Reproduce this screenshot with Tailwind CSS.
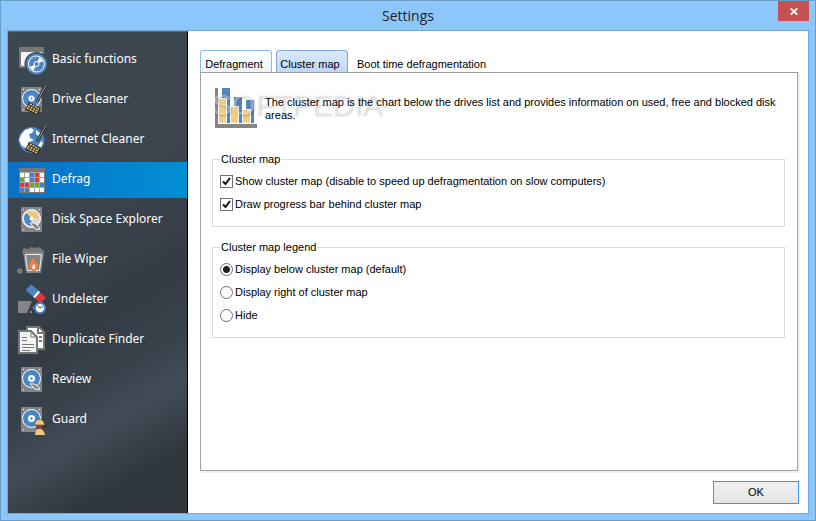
<!DOCTYPE html>
<html lang="en">
<head>
  <meta charset="UTF-8" />
  <meta name="viewport" content="width=device-width, initial-scale=1.0" />
  <title>Settings</title>
  <script src="https://cdn.jsdelivr.net/npm/@tailwindcss/browser@4"></script>
</head>
<body class="flex min-h-screen flex-col border border-[#6a9cc8] bg-[#8cc6fa] px-[6px] pb-[6px] font-['Liberation_Sans',sans-serif] text-[11px] leading-[13px] text-black">
  <!-- Title bar -->
  <header class="relative flex h-[29px] shrink-0 items-center justify-center">
    <h1 class="font-['Open_Sans',sans-serif] text-[14px] leading-5 text-[#222]">Settings</h1>
    <button aria-label="Close" class="absolute right-0 top-0 flex h-5 w-[31px] items-center justify-center bg-[#c75050]">
      <svg class="h-[7px] w-2" viewBox="0 0 8 7" fill="none" stroke="#fff" stroke-width="1.7"><path d="M.7.3l6.6 6.4M7.3.3L.7 6.7"/></svg>
    </button>
  </header>

  <div class="flex flex-1 border border-[#74a9dc] bg-white">
    <!-- Sidebar -->
    <nav class="w-[180px] shrink-0 border-r border-t border-r-black border-t-[#666b70] bg-[linear-gradient(150deg,#3d474f_0%,#3c454e_36%,#343c45_56%,#37414a_68%,#414c56_77%,#30383f_88%,#2f363d_100%)] pt-[10px] font-['Noto_Sans',sans-serif]">
      <ul class="flex flex-col gap-1 text-[12px] leading-4 text-white">
        <li><a href="#" class="flex h-9 items-center gap-1 pl-2">
          <svg class="h-9 w-8" viewBox="0 0 32 36">
            <path d="M3 5h25v21H3z" fill="#777"/><path d="M5 10h21v14H5z" fill="#f4f4f4"/>
            <circle cx="20.500" cy="22" r="12" fill="#3d474f"/><circle cx="20.500" cy="22" r="10.500" fill="#4a86c5"/>
            <circle cx="20.500" cy="22" r="8" fill="none" stroke="#fff"/>
            <path d="M20.500 22l3-7 4 4zM20.500 22l-7 3 4 4z" fill="#fff"/><circle cx="20.500" cy="22" r="2.500" fill="#4a86c5" stroke="#fff"/>
          </svg>
          <span class="pb-[2px]">Basic functions</span></a></li>
        <li><a href="#" class="flex h-9 items-center gap-1 pl-2">
          <svg class="h-9 w-8" viewBox="0 0 32 36">
            <rect x="5" y="5" width="21" height="25" rx="1" fill="#858585"/>
            <circle cx="15.500" cy="16.500" r="9" fill="#4a86c5" stroke="#fff"/><circle cx="15.500" cy="16.500" r="3" fill="#fff"/><circle cx="15.500" cy="16.500" r="1" fill="#4a86c5"/>
            <path d="M7 7h1v1H7zM23 7h1v1h-1zM7 27h1v1H7z" fill="#fff"/>
            <path d="M30 3L21 20" stroke="#333" stroke-width="3"/><path d="M30 3L21 20" stroke="#999"/>
            <path d="M13 20l12 6-3 7-13-5z" fill="#333"/><path d="M14 22l9 5M12 24l10 5M11 26l10 5" stroke="#f0c875" stroke-width="1.500" stroke-dasharray="2 1"/>
          </svg>
          <span class="pb-[2px]">Drive Cleaner</span></a></li>
        <li><a href="#" class="flex h-9 items-center gap-1 pl-2">
          <svg class="h-9 w-8" viewBox="0 0 32 36">
            <circle cx="15.500" cy="18" r="13" fill="#4a86c5"/>
            <path d="M5 13l4-5 6-2 3 2-2 3-3 1 1 4 4 2-5 2-3 6-4-2-3-6zM20 8l6 5-2 2-4-3zM22 24l3-5 2 2-2 4z" fill="#fff"/>
            <path d="M30 3L21 20" stroke="#333" stroke-width="3"/><path d="M30 3L21 20" stroke="#999"/>
            <path d="M13 20l12 6-3 7-13-5z" fill="#333"/><path d="M14 22l9 5M12 24l10 5M11 26l10 5" stroke="#f0c875" stroke-width="1.500" stroke-dasharray="2 1"/>
          </svg>
          <span class="pb-[2px]">Internet Cleaner</span></a></li>
        <li><a href="#" aria-current="page" class="flex h-9 items-center gap-1 bg-gradient-to-r from-[#0a70c7] to-[#038fd4] pl-2">
          <svg class="h-9 w-8" viewBox="0 0 32 36">
            <path d="M3 6h26v25H3z" fill="#777"/><path d="M4 10h24v20H4z" fill="#a8a8a8"/>
            <path d="M4 11h4v4H4zM9 11h4v4H9zM24 11h4v4h-4zM9 16h4v4H9zM24 16h4v4h-4zM14 26h4v4h-4zM19 26h4v4h-4zM24 26h4v4h-4z" fill="#fff"/>
            <path d="M14 11h4v4h-4zM14 16h4v4h-4zM24 21h4v4h-4zM4 26h4v4H4zM9 26h4v4H9z" fill="#4a7fc1"/>
            <path d="M19 11h4v4h-4zM19 16h4v4h-4zM4 21h4v4H4zM9 21h4v4H9z" fill="#d93a3a"/>
            <path d="M4 16h4v4H4zM14 21h4v4h-4zM19 21h4v4h-4z" fill="#6aa831"/>
          </svg>
          <span class="pb-[2px]">Defrag</span></a></li>
        <li><a href="#" class="flex h-9 items-center gap-1 pl-2">
          <svg class="h-9 w-8" viewBox="0 0 32 36">
            <rect x="5" y="5" width="21" height="25" rx="1" fill="#858585"/>
            <circle cx="15.500" cy="16.500" r="9" fill="#d8d8d8" stroke="#fff"/>
            <path d="M15.500 16.500V24a7.500 7.500 0 0 1-5-13z" fill="#4a86c5"/><path d="M15.500 16.500l-4-6a7.500 7.500 0 0 1 11.500 6z" fill="#f0c875"/>
            <circle cx="15.500" cy="16.500" r="2" fill="#fff"/>
            <path d="M14 21c5-1 8 2 10 6-5 2-7-3-10-6z" fill="#858585" stroke="#fff"/>
            <path d="M7 7h1v1H7zM23 7h1v1h-1zM7 27h1v1H7z" fill="#fff"/>
          </svg>
          <span class="pb-[2px]">Disk Space Explorer</span></a></li>
        <li><a href="#" class="flex h-9 items-center gap-1 pl-2">
          <svg class="h-9 w-8" viewBox="0 0 32 36">
            <path d="M6 9l2-3 4 1 3-2 4 1 4-1 5 4-1 3H7z" fill="#777"/>
            <path d="M7 10h21l-3 21H10z" fill="#858585"/><path d="M9.500 12.500h16l-2 16h-12z" fill="none" stroke="#eee"/>
            <path d="M17 14c0 5 5 6 5 10a4 4 0 0 1-9 1c-1-4 4-6 4-11z" fill="#f08040"/><path d="M18 22c2 3 1 5-.500 5s-2-2 .500-5z" fill="#fff"/>
            <path d="M1 28l2-2 3 1 1 3-3 2-3-2z" fill="#777"/>
          </svg>
          <span class="pb-[2px]">File Wiper</span></a></li>
        <li><a href="#" class="flex h-9 items-center gap-1 pl-2">
          <svg class="h-9 w-8" viewBox="0 0 32 36">
            <path d="M2 19h14l-5 12H2z" fill="#858585"/>
            <g transform="rotate(42 19.500 11.500)">
              <rect x="10" y="7.500" width="11" height="8" rx="1" fill="#4a86c5"/>
              <rect x="22" y="7.500" width="8" height="8" rx="2" fill="#d93a3a"/>
              <path d="M20 7.500h2v8h-2z" fill="#fff"/>
            </g>
            <circle cx="24" cy="26" r="5" fill="#fff" stroke="#4a86c5" stroke-width="2"/><path d="M21.500 23.500L24 26l3-2" fill="none" stroke="#345"/>
            <path d="M16 25l4-1-2 4z" fill="#4a86c5"/><path d="M14 29h2v2h-2z" fill="#858585"/>
          </svg>
          <span class="pb-[2px]">Undeleter</span></a></li>
        <li><a href="#" class="flex h-9 items-center gap-1 pl-2">
          <svg class="h-9 w-8" viewBox="0 0 32 36">
            <path d="M11 5h12l5 5v17H11z" fill="#fff" stroke="#777" stroke-width="2"/><path d="M22 5v6h6M23 15h3M23 19h3" stroke="#777" stroke-width="2" fill="none"/>
            <path d="M3 9h12l6 6v16H3z" fill="#f4f4f4" stroke="#777" stroke-width="2"/>
            <path d="M15 9v6h6M6 15.500h5M6 18.500h5M6 22.500h12M6 25.500h12M6 28.500h8" stroke="#777" fill="none"/>
          </svg>
          <span class="pb-[2px]">Duplicate Finder</span></a></li>
        <li><a href="#" class="flex h-9 items-center gap-1 pl-2">
          <svg class="h-9 w-8" viewBox="0 0 32 36">
            <rect x="5" y="5" width="21" height="25" rx="1" fill="#858585"/>
            <circle cx="15.500" cy="16.500" r="9" fill="#4a86c5" stroke="#fff"/><circle cx="15.500" cy="16.500" r="3.500" fill="#fff"/><circle cx="15.500" cy="16.500" r="1.200" fill="#4a86c5"/>
            <path d="M14 22c5-1 8 2 10 5-4 2-7-2-10-5z" fill="#858585" stroke="#fff"/>
            <path d="M7 7h1v1H7zM23 7h1v1h-1zM7 27h1v1H7z" fill="#fff"/>
          </svg>
          <span class="pb-[2px]">Review</span></a></li>
        <li><a href="#" class="flex h-9 items-center gap-1 pl-2">
          <svg class="h-9 w-8" viewBox="0 0 32 36">
            <rect x="5" y="5" width="21" height="25" rx="1" fill="#858585"/>
            <circle cx="15.500" cy="16.500" r="9" fill="#4a86c5" stroke="#fff"/><circle cx="15.500" cy="16.500" r="3.500" fill="#fff"/><circle cx="15.500" cy="16.500" r="1.200" fill="#4a86c5"/>
            <path d="M7 7h1v1H7zM23 7h1v1h-1zM7 27h1v1H7z" fill="#fff"/>
            <path d="M19 21c1-5 8-5 9 0l1 2H18z" fill="#f0c875" stroke="#333" stroke-width=".5"/><path d="M20 23h7v4h-7z" fill="#6b4f3a"/>
            <path d="M19 33c0-8 9-8 10 0z" fill="#f0c875"/><path d="M26 26l3-2h2" stroke="#222" fill="none"/>
          </svg>
          <span class="pb-[2px]">Guard</span></a></li>
      </ul>
    </nav>

    <!-- Settings pane -->
    <main class="flex flex-1 flex-col pb-[9px] pl-3 pr-[9px] pt-[19px]">
      <div role="tablist" class="flex h-[22px] items-stretch gap-1">
        <button role="tab" class="w-[72px] rounded-t border border-b-0 border-[#8db9e8] bg-gradient-to-b from-white to-[#edf4fe] pr-1 pt-[5px] text-center">Defragment</button>
        <button role="tab" aria-selected="true" class="w-[72px] rounded-t border border-b-0 border-[#7da5d8] bg-gradient-to-b from-[#dbe9fc] to-[#bdd8fb] pr-1 pt-[5px] text-center">Cluster map</button>
        <button role="tab" class="px-[5px] pt-[6px]">Boot time defragmentation</button>
      </div>

      <section role="tabpanel" class="mr-px flex-1 border border-[#a0a0a0] px-3 pl-[11px] pt-3 shadow-[1px_1px_0_1px_#f0f0f0]">
        <div class="relative flex gap-2">
          <svg class="ml-[3px] mt-[2px] h-[42px] w-[42px] shrink-0" viewBox="0 0 42 42">
            <path d="M0 1h3v36h39v4H0z" fill="#858585"/>
            <path d="M7 1h8v35H7zM19 10h8v26h-8zM31 13h8v23h-8z" fill="#5585b8"/>
            <path d="M3.500 11.500h8V36h-8zM15.500 19.500h8V36h-8zM27.500 22.500h8V36h-8z" fill="#f4cc80" stroke="#fff"/>
          </svg>
          <span class="pointer-events-none absolute left-0 top-1 text-[30px] leading-8 text-white/40 [text-shadow:1px_1px_2px_#00000030]">SOFTPEDIA<sup class="text-[10px]">®</sup></span>
          <p class="relative pt-[11px]">The cluster map is the chart below the drives list and provides information on used, free and blocked disk areas.</p>
        </div>

        <fieldset class="mt-6 border border-[#dcdcdc] px-[7px] pb-[15px]">
          <legend class="px-px">Cluster map</legend>
          <div class="flex flex-col items-start gap-[10px] pt-[9px]">
            <label class="flex h-[13px] items-center gap-[2px]">
              <input type="checkbox" checked class="size-[13px] appearance-none border border-[#707070] bg-white" />
              <svg class="pointer-events-none -ml-[15px] size-[13px]" viewBox="0 0 13 13" fill="none" stroke="#111" stroke-width="2"><path d="M3 6.500L5.500 9l4.500-6"/></svg>
              Show cluster map (disable to speed up defragmentation on slow computers)
            </label>
            <label class="flex h-[13px] items-center gap-[2px]">
              <input type="checkbox" checked class="size-[13px] appearance-none border border-[#707070] bg-white" />
              <svg class="pointer-events-none -ml-[15px] size-[13px]" viewBox="0 0 13 13" fill="none" stroke="#111" stroke-width="2"><path d="M3 6.500L5.500 9l4.500-6"/></svg>
              Draw progress bar behind cluster map
            </label>
          </div>
        </fieldset>

        <fieldset class="mt-[14px] border border-[#dcdcdc] px-[7px] pb-[15px]">
          <legend class="px-px">Cluster map legend</legend>
          <div class="flex flex-col items-start gap-[10px] pt-[9px]">
            <label class="flex h-[13px] items-center gap-[2px]">
              <input type="radio" name="legend" checked class="size-[13px] appearance-none rounded-full border border-[#707070] bg-white checked:bg-[radial-gradient(circle,#222_3px,#fff_4px)]" />
              Display below cluster map (default)
            </label>
            <label class="flex h-[13px] items-center gap-[2px]">
              <input type="radio" name="legend" class="size-[13px] appearance-none rounded-full border border-[#707070] bg-white checked:bg-[radial-gradient(circle,#222_3px,#fff_4px)]" />
              Display right of cluster map
            </label>
            <label class="flex h-[13px] items-center gap-[2px]">
              <input type="radio" name="legend" class="size-[13px] appearance-none rounded-full border border-[#707070] bg-white checked:bg-[radial-gradient(circle,#222_3px,#fff_4px)]" />
              Hide
            </label>
          </div>
        </fieldset>
      </section>

      <div class="mt-[10px] flex justify-end">
        <button class="h-[23px] w-[86px] border border-[#3399ff] bg-gradient-to-b from-[#f0f0f0] to-[#e5e5e5]">OK</button>
      </div>
    </main>
  </div>
</body>
</html>
